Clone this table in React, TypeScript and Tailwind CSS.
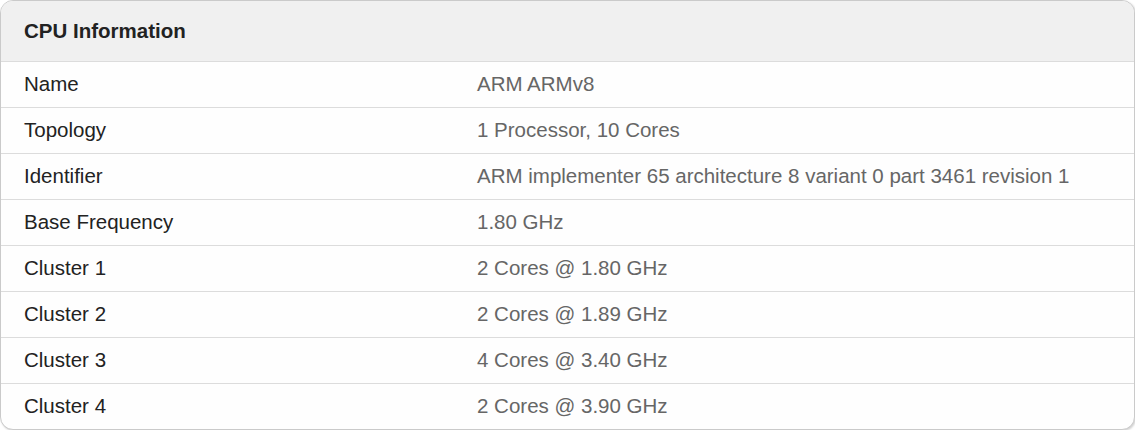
const rows: [string, string][] = [
  ['Name', 'ARM ARMv8'],
  ['Topology', '1 Processor, 10 Cores'],
  ['Identifier', 'ARM implementer 65 architecture 8 variant 0 part 3461 revision 1'],
  ['Base Frequency', '1.80 GHz'],
  ['Cluster 1', '2 Cores @ 1.80 GHz'],
  ['Cluster 2', '2 Cores @ 1.89 GHz'],
  ['Cluster 3', '4 Cores @ 3.40 GHz'],
  ['Cluster 4', '2 Cores @ 3.90 GHz'],
];

export default function App() {
  return (
    <div className="w-[1135px] h-[430px] bg-white" style={{ fontFamily: '"Liberation Sans", Arial, sans-serif' }}>
      <div className="h-[430px] flex flex-col border border-[#cacaca] rounded-[13px] overflow-hidden bg-[#fefefe] shadow-[1px_1px_2px_rgba(0,0,0,0.18)]">
        <div className="h-[61px] shrink-0 bg-[#f0f0f0] flex items-center px-[23px] border-b border-[#dcdcdc]">
          <h2 className="text-[20.5px] font-bold text-[#222]">CPU Information</h2>
        </div>
        {rows.map(([label, value], i) => (
          <div
            key={label}
            className={`flex-1 flex items-center px-[23px] text-[20.5px] ${i < rows.length - 1 ? 'border-b border-[#dcdcdc]' : ''}`}
          >
            <div className="w-[453px] text-[#222]">{label}</div>
            <div className="flex-1 text-[#666]">{value}</div>
          </div>
        ))}
      </div>
    </div>
  );
}
